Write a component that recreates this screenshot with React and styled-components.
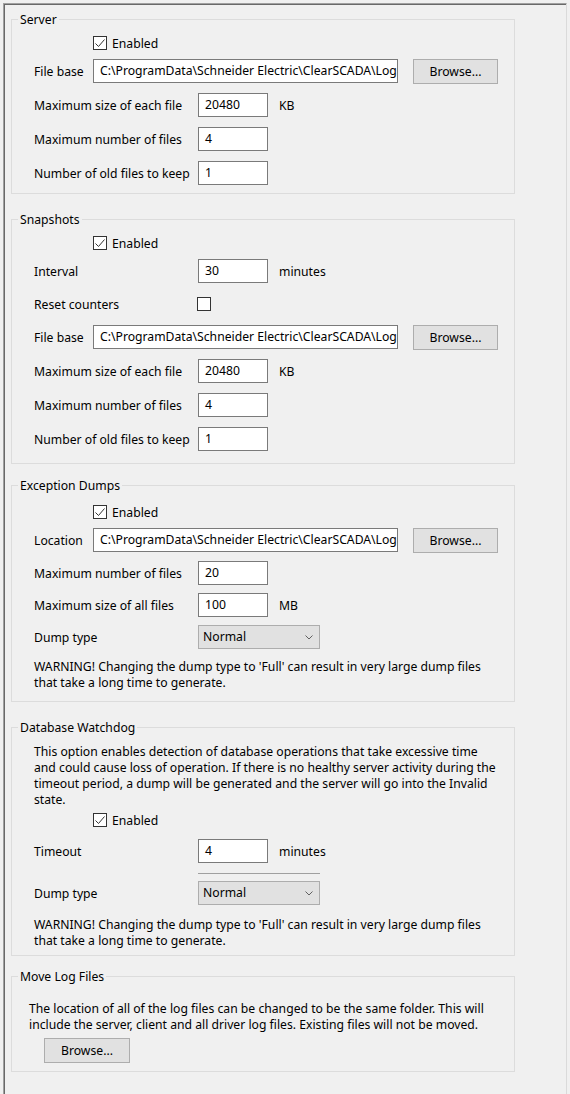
import React from 'react';
import styled, { createGlobalStyle } from 'styled-components';

const Global = createGlobalStyle`
  html, body { margin: 0; padding: 0; background: #f0f0f0; }
  body {
    font-family: "Noto Sans", "Open Sans", sans-serif;
    font-size: 12.2px;
    color: #000;
  }
  #root { width: 570px; height: 1094px; overflow: hidden; }
`;

const Page = styled.div`
  width: 570px;
  height: 1094px;
  box-sizing: border-box;
  padding: 3px 0 0 3px;
`;

const Panel = styled.div`
  width: 564px;
  height: 100%;
  box-sizing: border-box;
  border-top: 1px solid #a0a0a0;
  border-left: 1px solid #a0a0a0;
  border-right: 1px solid #dadada;
  box-shadow: inset 1px 1px 0 #696969;
  padding-left: 7px;
  display: flex;
  flex-direction: column;
`;

const Group = styled.fieldset`
  margin: ${p => p.$top}px 0 0 0;
  padding: ${p => p.$pt}px 0 ${p => p.$pb}px 0;
  width: 504px;
  min-width: 0;
  box-sizing: border-box;
  border: 1px solid #dcdcdc;
  display: flex;
  flex-direction: column;
`;

const Legend = styled.legend`
  margin-left: 6px;
  padding: 0 2px;
  line-height: 17px;
  height: 17px;
`;

const Row = styled.div`
  display: flex;
  align-items: center;
  height: ${p => p.$h || 34}px;
  margin-top: ${p => p.$mt || 0}px;
  padding-left: ${p => (p.$indent ?? 22)}px;
  white-space: nowrap;
`;

const Label = styled.span`
  width: ${p => p.$w}px;
  flex-shrink: 0;
`;

const TextBox = styled.div`
  width: ${p => p.$w}px;
  height: 24px;
  box-sizing: border-box;
  border: 1px solid #7a7a7a;
  background: #fff;
  padding-left: 6px;
  line-height: 22px;
  white-space: nowrap;
  overflow: hidden;
  flex-shrink: 0;
`;

const Unit = styled.span`
  margin-left: 11px;
`;

const Button = styled.button`
  width: ${p => p.$w || 85}px;
  height: 25px;
  margin-left: ${p => p.$ml || 0}px;
  box-sizing: border-box;
  background: #e1e1e1;
  border: 1px solid #adadad;
  border-radius: 0;
  padding: 0;
  font: inherit;
  color: #000;
  line-height: 23px;
  flex-shrink: 0;
`;

const Box = styled.span`
  width: 14px;
  height: 14px;
  box-sizing: border-box;
  border: 1px solid #333;
  background: #fff;
  display: inline-flex;
  flex-shrink: 0;
  margin-left: ${p => p.$ml || 0}px;
`;

const CheckText = styled.span`
  margin-left: 5px;
`;

const Dropdown = styled.div`
  width: 122px;
  height: 24px;
  box-sizing: border-box;
  background: #e1e1e1;
  border: 1px solid #adadad;
  padding: 0 6px 0 4px;
  display: flex;
  align-items: center;
  justify-content: space-between;
  line-height: 22px;
  flex-shrink: 0;
`;

const Separator = styled.div`
  margin: 5px 0 0 186px;
  width: 122px;
  height: 1px;
  background: #a0a0a0;
`;

const Para = styled.p`
  margin: ${p => p.$mt || 0}px 0 0 0;
  padding-left: ${p => (p.$indent ?? 22)}px;
  line-height: 16px;
  white-space: nowrap;
`;

const PATH = 'C:\\ProgramData\\Schneider Electric\\ClearSCADA\\Logs';

function CheckBox({ checked, ml }) {
  return (
    <Box $ml={ml}>
      {checked && (
        <svg width="12" height="12" viewBox="0 0 12 12">
          <polyline points="1.5,6.5 4.5,9.5 10.5,2.5" fill="none" stroke="#333" strokeWidth="1" />
        </svg>
      )}
    </Box>
  );
}

function Enabled({ mt }) {
  return (
    <Row $h={22} $mt={mt} $indent={81}>
      <CheckBox checked />
      <CheckText>Enabled</CheckText>
    </Row>
  );
}

function PathRow({ label, h }) {
  return (
    <Row $h={h}>
      <Label $w={59}>{label}</Label>
      <TextBox $w={305}>{PATH}</TextBox>
      <Button $ml={15}>Browse...</Button>
    </Row>
  );
}

function NumRow({ label, value, unit, h, mt }) {
  return (
    <Row $h={h} $mt={mt}>
      <Label $w={164}>{label}</Label>
      <TextBox $w={70}>{value}</TextBox>
      {unit && <Unit>{unit}</Unit>}
    </Row>
  );
}

function DumpRow({ h, mt }) {
  return (
    <Row $h={h} $mt={mt}>
      <Label $w={164}>Dump type</Label>
      <Dropdown>
        <span>Normal</span>
        <svg width="8" height="5" viewBox="0 0 8 5">
          <polyline points="0.5,0.5 4,4 7.5,0.5" fill="none" stroke="#606060" strokeWidth="1" />
        </svg>
      </Dropdown>
    </Row>
  );
}

function Warning({ mt }) {
  return (
    <Para $mt={mt}>
      WARNING! Changing the dump type to 'Full' can result in very large dump files
      <br />
      that take a long time to generate.
    </Para>
  );
}

export default function App() {
  return (
    <>
      <Global />
      <Page>
        <Panel>
          <Group $top={7} $pt={4} $pb={3}>
            <Legend>Server</Legend>
            <Enabled />
            <PathRow label="File base" />
            <NumRow label="Maximum size of each file" value="20480" unit="KB" />
            <NumRow label="Maximum number of files" value="4" />
            <NumRow label="Number of old files to keep" value="1" />
          </Group>

          <Group $top={17} $pt={4} $pb={7}>
            <Legend>Snapshots</Legend>
            <Enabled />
            <NumRow label="Interval" value="30" unit="minutes" />
            <Row $h={32}>
              <Label $w={163}>Reset counters</Label>
              <CheckBox />
            </Row>
            <PathRow label="File base" />
            <NumRow label="Maximum size of each file" value="20480" unit="KB" />
            <NumRow label="Maximum number of files" value="4" />
            <NumRow label="Number of old files to keep" value="1" />
          </Group>

          <Group $top={13} $pt={7} $pb={10}>
            <Legend>Exception Dumps</Legend>
            <Enabled />
            <PathRow label="Location" />
            <NumRow label="Maximum number of files" value="20" h={32} />
            <NumRow label="Maximum size of all files" value="100" unit="MB" h={32} />
            <DumpRow h={32} />
            <Warning mt={6} />
          </Group>

          <Group $top={17} $pt={8} $pb={6}>
            <Legend>Database Watchdog</Legend>
            <Para>
              This option enables detection of database operations that take excessive time
              <br />
              and could cause loss of operation. If there is no healthy server activity during the
              <br />
              timeout period, a dump will be generated and the server will go into the Invalid
              <br />
              state.
            </Para>
            <Enabled mt={1} />
            <NumRow label="Timeout" value="4" unit="minutes" mt={3} />
            <Separator />
            <DumpRow h={34} mt={2} />
            <Warning mt={7} />
          </Group>

          <Group $top={12} $pt={16} $pb={8}>
            <Legend>Move Log Files</Legend>
            <Para $indent={17}>
              The location of all of the log files can be changed to be the same folder. This will
              <br />
              include the server, client and all driver log files. Existing files will not be moved.
            </Para>
            <Row $h={25} $mt={5} $indent={32}>
              <Button $w={86}>Browse...</Button>
            </Row>
          </Group>
        </Panel>
      </Page>
    </>
  );
}
